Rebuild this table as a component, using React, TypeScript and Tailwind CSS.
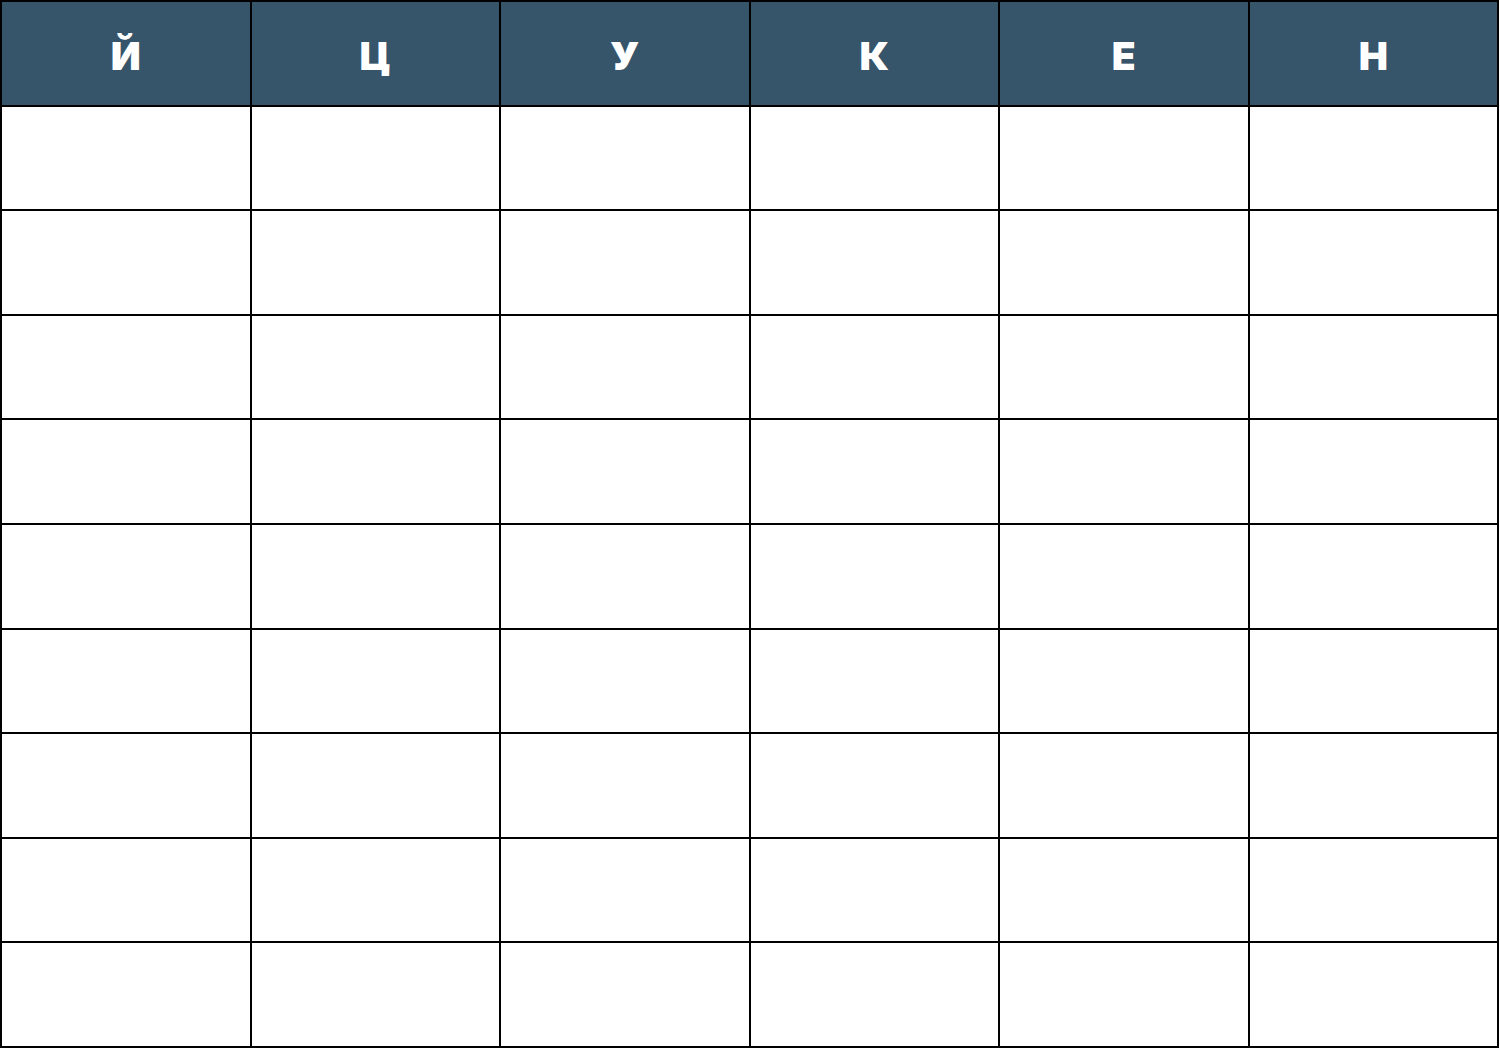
const headers = ['Й', 'Ц', 'У', 'К', 'Е', 'Н']

const bodyRows = 9

export default function App() {
  return (
    <div className="w-[1500px] h-[1055px] bg-white">
      <div className="w-[1499px] h-[1048px] grid grid-cols-6 grid-rows-10 gap-[2px] p-[2px] bg-black">
        {headers.map((h) => (
          <div
            key={h}
            className="bg-[#36546a] flex items-center justify-center pt-[5px] text-white text-[39px] font-black leading-none font-['Inter','Noto_Sans',sans-serif]"
          >
            {h}
          </div>
        ))}
        {Array.from({ length: bodyRows * headers.length }).map((_, i) => (
          <div key={i} className="bg-white" />
        ))}
      </div>
    </div>
  )
}
